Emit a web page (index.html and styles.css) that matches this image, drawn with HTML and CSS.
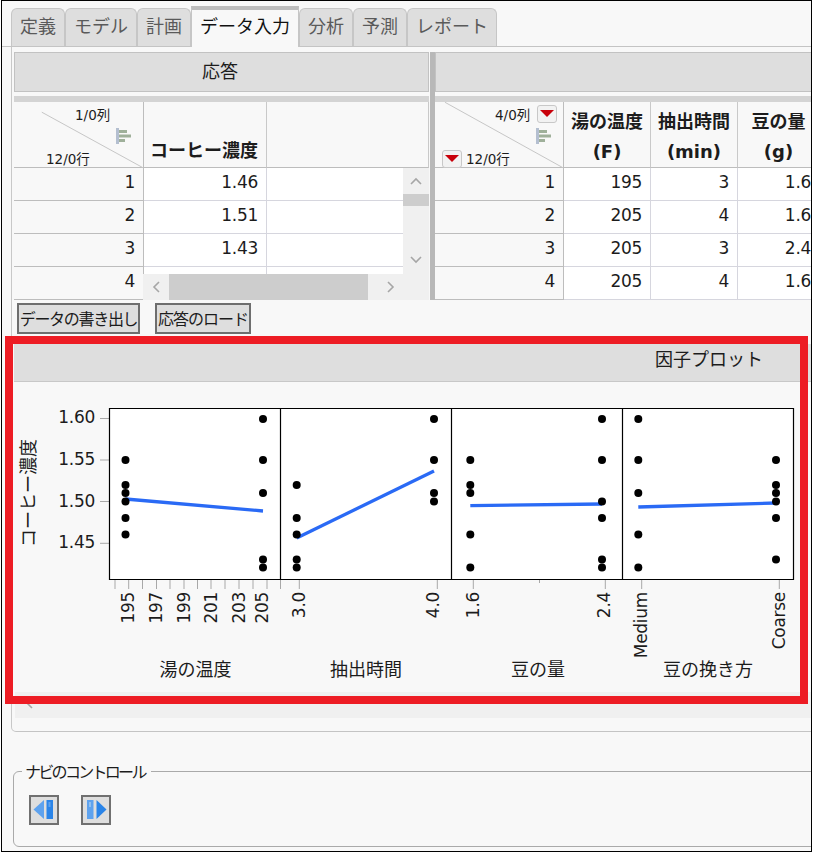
FILE: index.html
```html
<!DOCTYPE html>
<html lang="ja">
<head>
<meta charset="utf-8">
<title>データ入力</title>
<link rel="stylesheet" href="styles.css">
</head>
<body>
<div class="frame">
  <nav class="tabs">
    <div class="tab">定義</div>
    <div class="tab">モデル</div>
    <div class="tab">計画</div>
    <div class="tab active">データ入力</div>
    <div class="tab">分析</div>
    <div class="tab">予測</div>
    <div class="tab">レポート</div>
  </nav>
  <main class="panel">
    <div class="split">
      <section class="pane pane-left">
        <div class="pane-head">応答</div>
        <div class="strip"></div>
        <div class="grid grid-left">
          <div class="corner">
            <svg class="diag" viewBox="0 0 130 66"><line x1="28" y1="10" x2="130" y2="66"/></svg>
            <span class="lbl lbl-c1">1/0列</span>
            <svg class="bars bars-l" viewBox="0 0 16 16"><rect x="0" y="0" width="3" height="16" fill="#b4bfd0"/><rect x="3" y="2" width="8" height="3" fill="#9fb09a"/><rect x="3" y="6.5" width="12" height="3" fill="#9fb09a"/><rect x="3" y="11" width="6" height="3" fill="#9fb09a"/></svg>
            <span class="lbl lbl-r1">12/0行</span>
          </div>
          <div class="colhead colhead-main">コーヒー濃度</div>
          <div class="colhead"></div>
          <div class="rowhead">1</div><div class="cell">1.46</div><div class="cell"></div>
          <div class="rowhead">2</div><div class="cell">1.51</div><div class="cell"></div>
          <div class="rowhead">3</div><div class="cell">1.43</div><div class="cell"></div>
          <div class="rowhead">4</div><div class="cell"></div><div class="cell"></div>
        </div>
        <div class="vscroll">
          <svg class="chev-v" viewBox="0 0 12 8"><path d="M1 7l5-5 5 5"/></svg>
          <div class="vthumb"></div>
          <svg class="chev-v chev-down" viewBox="0 0 12 8"><path d="M1 1l5 5 5-5"/></svg>
        </div>
        <div class="hscroll">
          <svg class="chev-h" viewBox="0 0 8 12"><path d="M7 1L2 6l5 5"/></svg>
          <div class="hthumb"></div>
          <svg class="chev-h" viewBox="0 0 8 12"><path d="M1 1l5 5-5 5"/></svg>
        </div>
      </section>
      <div class="splitter"></div>
      <section class="pane pane-right">
        <div class="pane-head"></div>
        <div class="strip"></div>
        <div class="grid grid-right">
          <div class="corner">
            <svg class="diag" viewBox="0 0 129 66"><line x1="10" y1="0" x2="129" y2="66"/></svg>
            <span class="lbl lbl-c2">4/0列</span>
            <span class="redbtn redbtn-c"></span>
            <svg class="bars bars-r" viewBox="0 0 16 16"><rect x="0" y="0" width="3" height="16" fill="#b4bfd0"/><rect x="3" y="2" width="8" height="3" fill="#9fb09a"/><rect x="3" y="6.5" width="12" height="3" fill="#9fb09a"/><rect x="3" y="11" width="6" height="3" fill="#9fb09a"/></svg>
            <span class="redbtn redbtn-r"></span>
            <span class="lbl lbl-r2">12/0行</span>
          </div>
          <div class="colhead two">湯の温度<br>(F)</div>
          <div class="colhead two">抽出時間<br>(min)</div>
          <div class="colhead two">豆の量<br>(g)</div>
          <div class="rowhead">1</div><div class="cell">195</div><div class="cell">3</div><div class="cell">1.6</div>
          <div class="rowhead">2</div><div class="cell">205</div><div class="cell">4</div><div class="cell">1.6</div>
          <div class="rowhead">3</div><div class="cell">205</div><div class="cell">3</div><div class="cell">2.4</div>
          <div class="rowhead">4</div><div class="cell">205</div><div class="cell">4</div><div class="cell">1.6</div>
        </div>
      </section>
    </div>
    <div class="actions">
      <button class="btn btn-first">データの書き出し</button>
      <button class="btn">応答のロード</button>
    </div>
    <section class="profile">
      <h2 class="profile-head">因子プロット</h2>
      <svg class="plot" viewBox="14 382 797 310">
        <rect class="plot-bg" x="109.5" y="408.5" width="684" height="171"/>
        <g class="ticks">
          <path d="M100 418.5h9M100 460h9M100 501.5h9M100 543.3h9"/>
          <path d="M115 580v9M128.700 580v9M142.500 580v9M156.500 580v9M170 580v9M184 580v9M197.500 580v9M211 580v9M225 580v9M239 580v9M253 580v9M267 580v9M280.500 580v9"/>
          <path d="M299.300 580v9M437.300 580v9M473.300 580v9M539.500 580v3M605.300 580v9M641.700 580v9M779.300 580v9"/>
        </g>
        <g class="fit">
          <line x1="125.5" y1="499" x2="263" y2="511"/>
          <line x1="296.7" y1="538" x2="434" y2="471"/>
          <line x1="470.3" y1="505.7" x2="602" y2="504"/>
          <line x1="638.3" y1="507" x2="776" y2="503"/>
        </g>
        <g class="dots">
          <circle cx="125.5" cy="460" r="4"/><circle cx="125.5" cy="485" r="4"/><circle cx="125.5" cy="493" r="4"/><circle cx="125.5" cy="501.5" r="4"/><circle cx="125.5" cy="518" r="4"/><circle cx="125.5" cy="534.5" r="4"/>
          <circle cx="263" cy="419" r="4"/><circle cx="263" cy="460" r="4"/><circle cx="263" cy="493" r="4"/><circle cx="263" cy="559.5" r="4"/><circle cx="263" cy="567.5" r="4"/>
          <circle cx="296.7" cy="485" r="4"/><circle cx="296.7" cy="518" r="4"/><circle cx="296.7" cy="534.5" r="4"/><circle cx="296.7" cy="559.5" r="4"/><circle cx="296.7" cy="567.5" r="4"/>
          <circle cx="434" cy="419" r="4"/><circle cx="434" cy="460" r="4"/><circle cx="434" cy="493" r="4"/><circle cx="434" cy="501.5" r="4"/>
          <circle cx="470.3" cy="460" r="4"/><circle cx="470.3" cy="485" r="4"/><circle cx="470.3" cy="493" r="4"/><circle cx="470.3" cy="534.5" r="4"/><circle cx="470.3" cy="567.5" r="4"/>
          <circle cx="602" cy="419" r="4"/><circle cx="602" cy="460" r="4"/><circle cx="602" cy="501.5" r="4"/><circle cx="602" cy="518" r="4"/><circle cx="602" cy="559.5" r="4"/><circle cx="602" cy="567.5" r="4"/>
          <circle cx="638.3" cy="419" r="4"/><circle cx="638.3" cy="460" r="4"/><circle cx="638.3" cy="493" r="4"/><circle cx="638.3" cy="534.5" r="4"/><circle cx="638.3" cy="567.5" r="4"/>
          <circle cx="776" cy="460" r="4"/><circle cx="776" cy="485" r="4"/><circle cx="776" cy="493" r="4"/><circle cx="776" cy="501.5" r="4"/><circle cx="776" cy="518" r="4"/><circle cx="776" cy="559.5" r="4"/>
        </g>
        <path class="plot-frame" d="M109.5 408.5h684v171h-684zM280.5 408.5v171M451.5 408.5v171M622.5 408.5v171"/>
        <g class="ylabels">
          <text x="95" y="423">1.60</text>
          <text x="95" y="465">1.55</text>
          <text x="95" y="506.500">1.50</text>
          <text x="95" y="548">1.45</text>
        </g>
        <g class="xlabels">
          <text transform="translate(134 592) rotate(-90)">195</text>
          <text transform="translate(162 592) rotate(-90)">197</text>
          <text transform="translate(190 592) rotate(-90)">199</text>
          <text transform="translate(217 592) rotate(-90)">201</text>
          <text transform="translate(245 592) rotate(-90)">203</text>
          <text transform="translate(268 592) rotate(-90)">205</text>
          <text transform="translate(305 592) rotate(-90)">3.0</text>
          <text transform="translate(439 592) rotate(-90)">4.0</text>
          <text transform="translate(479 592) rotate(-90)">1.6</text>
          <text transform="translate(610 592) rotate(-90)">2.4</text>
          <text transform="translate(647 592) rotate(-90)">Medium</text>
          <text transform="translate(785 592) rotate(-90)">Coarse</text>
        </g>
        <g class="axis-names">
          <text x="195.5" y="676">湯の温度</text>
          <text x="366" y="676">抽出時間</text>
          <text x="538" y="676">豆の量</text>
          <text x="708" y="676">豆の挽き方</text>
          <text transform="translate(35 493) rotate(-90)">コーヒー濃度</text>
        </g>
      </svg>
      <div class="bottom-scroll">
        <svg class="chev-h chev-b" viewBox="0 0 8 12"><path d="M7 1L2 6l5 5"/></svg>
      </div>
    </section>
  </main>
  <section class="nav-box">
    <span class="nav-legend">ナビのコントロール</span>
    <div class="nav-buttons">
      <button class="nav-btn" aria-label="前へ">
        <svg viewBox="0 0 26 26"><path class="ico-light" d="M2.5 12.5L13 3v19z"/><rect class="ico-dark" x="15.5" y="3" width="6.5" height="19"/><rect class="ico-light" x="17.5" y="5" width="2" height="5"/></svg>
      </button>
      <button class="nav-btn" aria-label="次へ">
        <svg viewBox="0 0 26 26"><rect class="ico-light" x="4" y="3" width="6.5" height="19"/><rect class="ico-pale" x="6" y="5" width="2" height="5"/><path class="ico-dark" d="M13.5 3v19l10-9.500z"/></svg>
      </button>
    </div>
  </section>
  <div class="callout"></div>
</div>
</body>
</html>
```

FILE: styles.css
```css
* { box-sizing: border-box; }

html, body {
  margin: 0;
  padding: 0;
  background: #fff;
}

body {
  font-family: "DejaVu Sans", "Noto Sans CJK JP", sans-serif;
  font-size: 17px;
  letter-spacing: -0.3px;
  color: #1c1c1c;
}

.frame {
  position: relative;
  width: 811px;
  height: 852px;
  margin-left: 1px;
  border: 1px solid #000;
  background: #f8f8f8;
  overflow: hidden;
}

.tabs {
  display: flex;
  height: 46px;
  padding: 7px 0 0 9px;
  border-bottom: 1px solid #c4c4c4;
  letter-spacing: 0;
}

.tab {
  height: 38px;
  padding: 0 8px;
  border: 1px solid #c6c6c6;
  border-bottom: none;
  border-radius: 6px 6px 0 0;
  background: #dedede;
  color: #5a5a5a;
  font-family: "Noto Sans CJK JP", sans-serif;
  font-size: 18px;
  line-height: 32px;
  white-space: nowrap;
}

.tab.active {
  position: relative;
  height: 41px;
  margin-top: -2px;
  margin-bottom: -1px;
  border-top: 4px solid #bcbcbc;
  border-radius: 0;
  background: #f8f8f8;
  color: #111;
  line-height: 31px;
}

.panel {
  width: 830px;
  height: 685px;
  margin-left: 9px;
  padding: 5px 0 0 2px;
  border-left: 1px solid #c8c8c8;
  border-bottom: 1px solid #c4c4c4;
  border-bottom-left-radius: 5px;
}

.split {
  display: flex;
  height: 248px;
}

.pane {
  position: relative;
  overflow: hidden;
}

.pane-left { width: 415px; }
.pane-right { width: 377px; }

.splitter {
  width: 5px;
  margin-left: 1px;
  background: #b8b8b8;
}

.pane-head {
  height: 40px;
  padding-right: 3px;
  border: 1px solid #c2c2c2;
  background: #dedede;
  font-family: "Noto Sans CJK JP", sans-serif;
  font-size: 18px;
  letter-spacing: 0;
  line-height: 35px;
  text-align: center;
}

.strip {
  height: 6px;
  margin-top: 4px;
  background: #d4d4d4;
}

.grid {
  display: grid;
  grid-template-rows: 66px repeat(4, 33px);
}

.grid-left { grid-template-columns: 130px 123px 162px; }
.grid-right { grid-template-columns: 129px 87px 87px 82px; }

.corner {
  position: relative;
  border-right: 1px solid #bdbdbd;
  border-bottom: 1px solid #bdbdbd;
}

.diag {
  position: absolute;
  left: 0;
  top: 0;
  width: 100%;
  height: 66px;
}

.diag line { stroke: #c6c6c6; stroke-width: 1; }

.lbl {
  position: absolute;
  font-size: 13.5px;
  letter-spacing: 0;
  line-height: 16px;
  white-space: nowrap;
}

.lbl-c1 { left: 61px; top: 5px; }
.lbl-r1 { left: 32px; top: 49px; }
.lbl-c2 { left: 60px; top: 5px; }
.lbl-r2 { left: 31px; top: 49px; }

.bars {
  position: absolute;
  top: 26px;
  width: 16px;
  height: 16px;
}

.bars-l { left: 102px; }
.bars-r { left: 101px; }

.redbtn {
  position: absolute;
  width: 20px;
  height: 18px;
  border: 1px solid #c8c8c8;
  border-radius: 3px;
  background: #f2f2f2;
}

.redbtn::after {
  content: "";
  position: absolute;
  left: 2px;
  top: 4px;
  border-left: 7.5px solid transparent;
  border-right: 7.5px solid transparent;
  border-top: 7px solid #c8000a;
}

.redbtn-c { left: 102px; top: 3px; }
.redbtn-r { left: 7px; top: 48px; }

.colhead {
  padding: 0 0 1px;
  border-right: 1px solid #c9c9c9;
  border-bottom: 1px solid #bdbdbd;
  display: flex;
  align-items: flex-end;
  justify-content: center;
  font-weight: 700;
  font-size: 18px;
  letter-spacing: 0;
  line-height: 30px;
  text-align: center;
}

.colhead-main { padding-right: 2px; }

.colhead.two {
  padding-bottom: 0;
}

.rowhead, .cell {
  padding-right: 8px;
  line-height: 28px;
  text-align: right;
}

.rowhead {
  border-right: 1px solid #bdbdbd;
  border-bottom: 1px solid #bdbdbd;
}

.cell {
  background: #fff;
  border-right: 1px solid #d6d6de;
  border-bottom: 1px solid #d6d6de;
}

.vscroll {
  position: absolute;
  left: 389px;
  top: 116px;
  width: 26px;
  height: 106px;
  background: #f0f0f0;
}

.vthumb {
  position: absolute;
  left: 0;
  top: 26px;
  width: 26px;
  height: 12px;
  background: #cdcdcd;
}

.chev-v {
  position: absolute;
  left: 7px;
  top: 9px;
  width: 12px;
  height: 8px;
  fill: none;
  stroke: #a6a6a6;
  stroke-width: 1.6;
}

.chev-down { top: 88px; }

.hscroll {
  position: absolute;
  left: 129px;
  top: 222px;
  width: 286px;
  height: 26px;
  display: flex;
  align-items: center;
  justify-content: space-between;
  padding: 0 34px 0 9px;
  background: #f0f0f0;
}

.hthumb {
  position: absolute;
  left: 26px;
  top: 0;
  width: 199px;
  height: 26px;
  background: #cdcdcd;
}

.chev-h {
  width: 8px;
  height: 12px;
  fill: none;
  stroke: #a6a6a6;
  stroke-width: 1.6;
}

.actions {
  display: flex;
  height: 44px;
  padding: 3px 0 0 3px;
}

.btn {
  width: 123px;
  height: 31px;
  margin: 0;
  padding: 0;
  border: 2px solid #6e6e6e;
  background: #dedede;
  color: #1c1c1c;
  font-family: "Noto Sans CJK JP", sans-serif;
  font-size: 16px;
  letter-spacing: -1.3px;
  line-height: 25px;
  white-space: nowrap;
}

.btn + .btn { width: 96px; letter-spacing: -1px; }
.btn-first { margin-right: 15px; }

.profile {
  width: 797px;
}

.profile-head {
  height: 38px;
  margin: 0;
  padding-left: 641px;
  border-bottom: 1px solid #c8c8c8;
  background: #dedede;
  font-family: "Noto Sans CJK JP", sans-serif;
  font-size: 18px;
  font-weight: 400;
  letter-spacing: 0;
  line-height: 29px;
  white-space: nowrap;
}

.plot {
  display: block;
  width: 797px;
  height: 310px;
}

.plot-bg { fill: #fff; }

.plot-frame {
  fill: none;
  stroke: #000;
  stroke-width: 1.2;
}

.ticks path {
  fill: none;
  stroke: #a8a8a8;
  stroke-width: 1;
}

.fit line {
  stroke: #2a6af5;
  stroke-width: 3.3;
}

.dots circle { fill: #000; }

.ylabels text,
.xlabels text {
  fill: #1c1c1c;
  font-size: 17px;
  text-anchor: end;
}

.axis-names text {
  fill: #1c1c1c;
  font-family: "Noto Sans CJK JP", sans-serif;
  font-size: 18px;
  letter-spacing: 0;
  text-anchor: middle;
}

.bottom-scroll {
  height: 26px;
  margin-left: 1px;
  padding: 5px 0 0 10px;
  background: #f0f0f0;
}

.chev-b { display: block; }

.nav-box {
  position: relative;
  width: 830px;
  height: 76px;
  margin: 39px 0 0 11px;
  border: 1.5px solid #aaa;
  border-radius: 6px 0 0 6px;
  padding: 23px 0 0 15px;
}

.nav-legend {
  position: absolute;
  left: 8px;
  top: -13px;
  padding: 0 6px 0 3px;
  background: #f8f8f8;
  font-family: "Noto Sans CJK JP", sans-serif;
  font-size: 16px;
  letter-spacing: -2.7px;
  line-height: 24px;
  white-space: nowrap;
}

.nav-buttons {
  display: flex;
  gap: 22px;
}

.nav-btn {
  width: 30px;
  height: 30px;
  padding: 0;
  border: 2px solid #707070;
  background: #dedede;
}

.nav-btn svg {
  display: block;
  width: 26px;
  height: 26px;
}

.ico-light { fill: #5ea2ee; }
.ico-dark { fill: #2a84e8; }
.ico-pale { fill: #8fc0f2; }

.callout {
  position: absolute;
  left: 3px;
  top: 335px;
  width: 803px;
  height: 368px;
  border: 8px solid #ed1c24;
  pointer-events: none;
}
```
